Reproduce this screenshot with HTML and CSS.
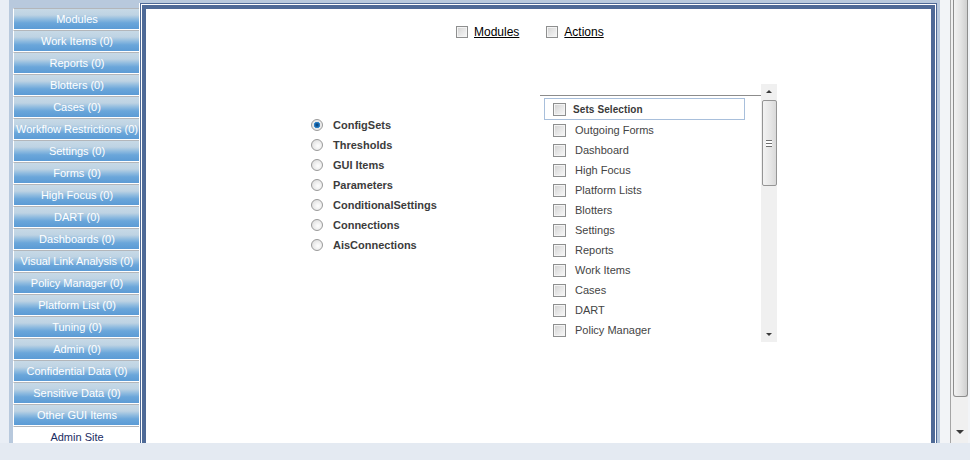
FILE: index.html
```html
<!DOCTYPE html>
<html>
<head>
<meta charset="utf-8">
<link rel="stylesheet" href="styles.css">
</head>
<body>
<div class="app">
  <div class="gutter-l"></div>
  <div class="main">
    <nav class="sidebar">
      <div class="nav-btn">Modules</div>
      <div class="nav-btn">Work Items (0)</div>
      <div class="nav-btn">Reports (0)</div>
      <div class="nav-btn">Blotters (0)</div>
      <div class="nav-btn">Cases (0)</div>
      <div class="nav-btn">Workflow Restrictions (0)</div>
      <div class="nav-btn">Settings (0)</div>
      <div class="nav-btn">Forms (0)</div>
      <div class="nav-btn">High Focus (0)</div>
      <div class="nav-btn">DART (0)</div>
      <div class="nav-btn">Dashboards (0)</div>
      <div class="nav-btn">Visual Link Analysis (0)</div>
      <div class="nav-btn">Policy Manager (0)</div>
      <div class="nav-btn">Platform List (0)</div>
      <div class="nav-btn">Tuning (0)</div>
      <div class="nav-btn">Admin (0)</div>
      <div class="nav-btn">Confidential Data (0)</div>
      <div class="nav-btn">Sensitive Data (0)</div>
      <div class="nav-btn">Other GUI Items</div>
      <div class="nav-btn active">Admin Site</div>
    </nav>
    <div class="frame-wrap">
      <div class="frame">
        <div class="frame-inner">
          <div class="top-row">
            <span class="cb"></span><a class="top-link">Modules</a>
            <span class="cb cb-second"></span><a class="top-link">Actions</a>
          </div>
          <div class="work-row">
            <div class="radios">
              <div class="radio-row"><span class="radio checked"></span><span class="radio-label">ConfigSets</span></div>
              <div class="radio-row"><span class="radio"></span><span class="radio-label">Thresholds</span></div>
              <div class="radio-row"><span class="radio"></span><span class="radio-label">GUI Items</span></div>
              <div class="radio-row"><span class="radio"></span><span class="radio-label">Parameters</span></div>
              <div class="radio-row"><span class="radio"></span><span class="radio-label">ConditionalSettings</span></div>
              <div class="radio-row"><span class="radio"></span><span class="radio-label">Connections</span></div>
              <div class="radio-row"><span class="radio"></span><span class="radio-label">AisConnections</span></div>
            </div>
            <div class="sets-panel">
              <div class="sets-list">
                <div class="sets-rule"></div>
                <div class="sets-header"><span class="cb"></span><span class="sets-title">Sets Selection</span></div>
                <div class="set-item"><span class="cb"></span><span>Outgoing Forms</span></div>
                <div class="set-item"><span class="cb"></span><span>Dashboard</span></div>
                <div class="set-item"><span class="cb"></span><span>High Focus</span></div>
                <div class="set-item"><span class="cb"></span><span>Platform Lists</span></div>
                <div class="set-item"><span class="cb"></span><span>Blotters</span></div>
                <div class="set-item"><span class="cb"></span><span>Settings</span></div>
                <div class="set-item"><span class="cb"></span><span>Reports</span></div>
                <div class="set-item"><span class="cb"></span><span>Work Items</span></div>
                <div class="set-item"><span class="cb"></span><span>Cases</span></div>
                <div class="set-item"><span class="cb"></span><span>DART</span></div>
                <div class="set-item"><span class="cb"></span><span>Policy Manager</span></div>
              </div>
              <div class="mini-scroll">
                <div class="arrow-up"></div>
                <div class="mini-thumb"><span class="grip"></span></div>
                <div class="mini-track"></div>
                <div class="arrow-down"></div>
              </div>
            </div>
          </div>
        </div>
      </div>
    </div>
  </div>
  <div class="gutter-r"></div>
  <div class="page-scroll">
    <div class="page-thumb"></div>
    <div class="page-track"></div>
    <div class="arrow-down page-arrow"></div>
  </div>
  <div class="gutter-rr"></div>
</div>
<div class="bottom-strip"></div>
</body>
</html>
```

FILE: styles.css
```css
html, body {
  margin: 0;
  padding: 0;
}
body {
  width: 970px;
  height: 460px;
  overflow: hidden;
  background: #e4eaf2;
  font-family: "Liberation Sans", Arial, sans-serif;
  display: flex;
  flex-direction: column;
}
.app {
  display: flex;
  height: 443px;
  overflow: hidden;
}
.gutter-l {
  width: 9px;
  background: #e9eef5;
}
.main {
  width: 931px;
  display: flex;
  background: #b8c9dd;
}
.sidebar {
  width: 127px;
  margin-left: 4px;
  padding-top: 8px;
  display: flex;
  flex-direction: column;
}
.nav-btn {
  height: 20px;
  line-height: 20px;
  border-top: 1px solid #b3b6ba;
  border-bottom: 1px solid #ffffff;
  border-left: 1px solid #ffffff;
  background: linear-gradient(#c7d9e6 0%, #bed3e3 30%, #8dbadf 52%, #6aa6da 70%, #5b9bd5 100%);
  color: #ffffff;
  font-size: 11px;
  text-align: center;
  white-space: nowrap;
  overflow: hidden;
  flex-shrink: 0;
}
.nav-btn.active {
  background: #ffffff;
  color: #1b2d63;
}
.frame-wrap {
  flex: 1;
  padding-top: 3px;
  padding-right: 3px;
  display: flex;
}
.frame {
  flex: 1;
  border: 1px solid #4e6a97;
  border-bottom: 0;
  box-shadow: -1px 0 0 #ffffff;
  padding: 1px 1px 0 1px;
  background: #ffffff;
  display: flex;
}
.frame-inner {
  flex: 1;
  border: 4px solid #4e6a97;
  border-bottom: 0;
  background: #ffffff;
  padding-top: 17px;
}
.top-row {
  display: flex;
  align-items: center;
  height: 12px;
  padding-left: 310px;
}
.cb {
  display: inline-block;
  box-sizing: border-box;
  width: 13px;
  height: 13px;
  border: 1px solid #8e8f8f;
  box-shadow: inset 0 0 0 1px #f4f4f4;
  background: linear-gradient(135deg, #d0d0d0 0%, #e4e4e4 45%, #f8f8f8 100%);
  flex-shrink: 0;
}
.top-row .cb {
  width: 12px;
  height: 12px;
}
.top-link {
  font-size: 12px;
  color: #000000;
  text-decoration: underline;
  margin-left: 6px;
  line-height: 12px;
}
.cb-second {
  margin-left: 27px;
}
.work-row {
  display: flex;
  margin-top: 46px;
}
.radios {
  margin-left: 165px;
  width: 229px;
  padding-top: 31px;
}
.radio-row {
  height: 20px;
  display: flex;
  align-items: center;
}
.radio {
  box-sizing: border-box;
  width: 12px;
  height: 12px;
  border-radius: 50%;
  border: 1px solid #9a9a9a;
  background: radial-gradient(circle at 60% 60%, #ffffff 0%, #eeeeee 45%, #d6d6d6 100%);
  flex-shrink: 0;
}
.radio.checked {
  background: radial-gradient(circle at 50% 50%, #0b3a6b 0%, #1d6db2 30%, #3d8fd2 42%, #e8e8e8 48%, #f2f2f2 100%);
}
.radio-label {
  margin-left: 10px;
  font-size: 11px;
  font-weight: bold;
  color: #3c3c3c;
}
.sets-panel {
  width: 237px;
  height: 258px;
  display: flex;
  overflow: hidden;
}
.sets-list {
  flex: 1;
  padding-top: 11px;
  overflow: hidden;
}
.sets-rule {
  height: 1px;
  background: #8c8c8c;
}
.sets-header {
  box-sizing: border-box;
  margin: 2px 0 0 4px;
  width: 201px;
  height: 22px;
  border: 1px solid #a8bfdb;
  display: flex;
  align-items: center;
  padding-left: 8px;
}
.sets-title {
  margin-left: 7px;
  font-size: 10px;
  font-weight: bold;
  color: #3a3a3a;
  letter-spacing: 0.1px;
}
.set-item {
  height: 20px;
  display: flex;
  align-items: center;
  padding-left: 13px;
  font-size: 11px;
  color: #444444;
}
.set-item .cb {
  margin-right: 9px;
}
.mini-scroll {
  width: 16px;
  background: #f0f0f0;
  display: flex;
  flex-direction: column;
  align-items: center;
}
.arrow-up {
  margin-top: 6px;
  width: 0;
  height: 0;
  border-left: 3px solid transparent;
  border-right: 3px solid transparent;
  border-bottom: 3px solid #3a3a3a;
}
.arrow-down {
  width: 0;
  height: 0;
  border-left: 3px solid transparent;
  border-right: 3px solid transparent;
  border-top: 3px solid #3a3a3a;
  margin-bottom: 6px;
}
.mini-thumb {
  box-sizing: border-box;
  margin-top: 7px;
  width: 15px;
  height: 86px;
  border: 1px solid #959595;
  border-radius: 2px;
  background: linear-gradient(90deg, #f3f3f3 0%, #e8e8e8 50%, #d9d9d9 100%);
  display: flex;
  align-items: center;
  justify-content: center;
}
.grip {
  width: 6px;
  height: 5px;
  border-top: 1px solid #6f6f6f;
  border-bottom: 1px solid #6f6f6f;
  background: linear-gradient(#ffffff 0 2px, #6f6f6f 2px 3px, #ffffff 3px);
}
.mini-track {
  flex: 1;
}
.gutter-r {
  width: 10px;
  background: #f2f4f7;
}
.page-scroll {
  width: 17px;
  border-left: 1px solid #a5a5a5;
  background: #f0f0f0;
  display: flex;
  flex-direction: column;
  align-items: center;
}
.page-thumb {
  box-sizing: border-box;
  width: 15px;
  height: 397px;
  margin-left: 1px;
  border: 1px solid #8d8d8d;
  border-top: 0;
  border-radius: 0 0 3px 3px;
  background: linear-gradient(90deg, #f2f2f2 0%, #e4e4e4 50%, #cfcfcf 100%);
}
.page-track {
  flex: 1;
}
.page-arrow {
  margin-bottom: 9px;
  border-left-width: 4px;
  border-right-width: 4px;
  border-top-width: 4px;
}
.gutter-rr {
  width: 2px;
  background: #f2f4f7;
}
.bottom-strip {
  height: 17px;
  background: #e4eaf2;
}
```
